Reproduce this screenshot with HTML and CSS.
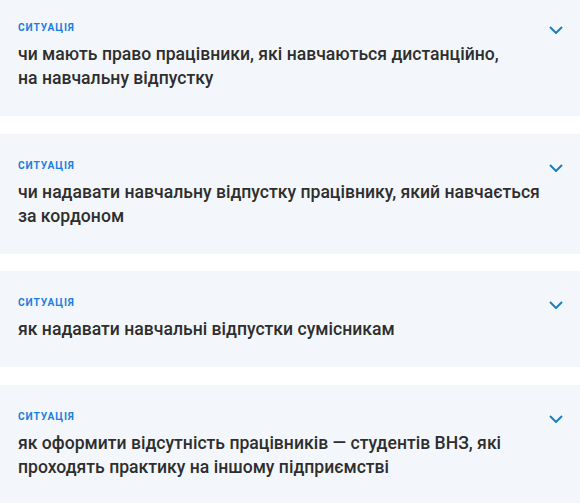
FILE: index.html
```html
<!DOCTYPE html>
<html lang="uk">
<head>
<meta charset="utf-8">
<link rel="stylesheet" href="styles.css">
</head>
<body>
<div class="list">
  <div class="card">
    <div class="text">
      <div class="label">Ситуація</div>
      <div class="title">чи мають право працівники, які навчаються дистанційно,<br>на навчальну відпустку</div>
    </div>
    <svg class="chev" width="14" height="8" viewBox="0 0 14 8"><path d="M1 1l6 6 6-6" fill="none" stroke="#1b7fbf" stroke-width="2"/></svg>
  </div>
  <div class="card">
    <div class="text">
      <div class="label">Ситуація</div>
      <div class="title">чи надавати навчальну відпустку працівнику, який навчається<br>за кордоном</div>
    </div>
    <svg class="chev" width="14" height="8" viewBox="0 0 14 8"><path d="M1 1l6 6 6-6" fill="none" stroke="#1b7fbf" stroke-width="2"/></svg>
  </div>
  <div class="card">
    <div class="text">
      <div class="label">Ситуація</div>
      <div class="title">як надавати навчальні відпустки сумісникам</div>
    </div>
    <svg class="chev" width="14" height="8" viewBox="0 0 14 8"><path d="M1 1l6 6 6-6" fill="none" stroke="#1b7fbf" stroke-width="2"/></svg>
  </div>
  <div class="card">
    <div class="text">
      <div class="label">Ситуація</div>
      <div class="title">як оформити відсутність працівників — студентів ВНЗ, які<br>проходять практику на іншому підприємстві</div>
    </div>
    <svg class="chev" width="14" height="8" viewBox="0 0 14 8"><path d="M1 1l6 6 6-6" fill="none" stroke="#1b7fbf" stroke-width="2"/></svg>
  </div>
</div>
</body>
</html>
```
FILE: styles.css
```css
html, body {
  margin: 0;
  padding: 0;
  background: #ffffff;
}
body {
  font-family: Roboto, "Liberation Sans", sans-serif;
}
.list {
  display: flex;
  flex-direction: column;
  gap: 17.5px;
  margin-top: -4px;
}
.card {
  background: #f3f7fb;
  display: flex;
  justify-content: space-between;
  align-items: flex-start;
  padding: 25px 17px 26px 18px;
}
.label {
  font-size: 10.2px;
  font-weight: 700;
  letter-spacing: 0.9px;
  text-transform: uppercase;
  color: #1a80e0;
  line-height: 14px;
}
.title {
  margin-top: 7px;
  font-size: 17.6px;
  font-weight: 500;
  line-height: 24px;
  color: #2e2e2e;
}
.chev {
  margin-top: 5px;
  flex: none;
}
```
